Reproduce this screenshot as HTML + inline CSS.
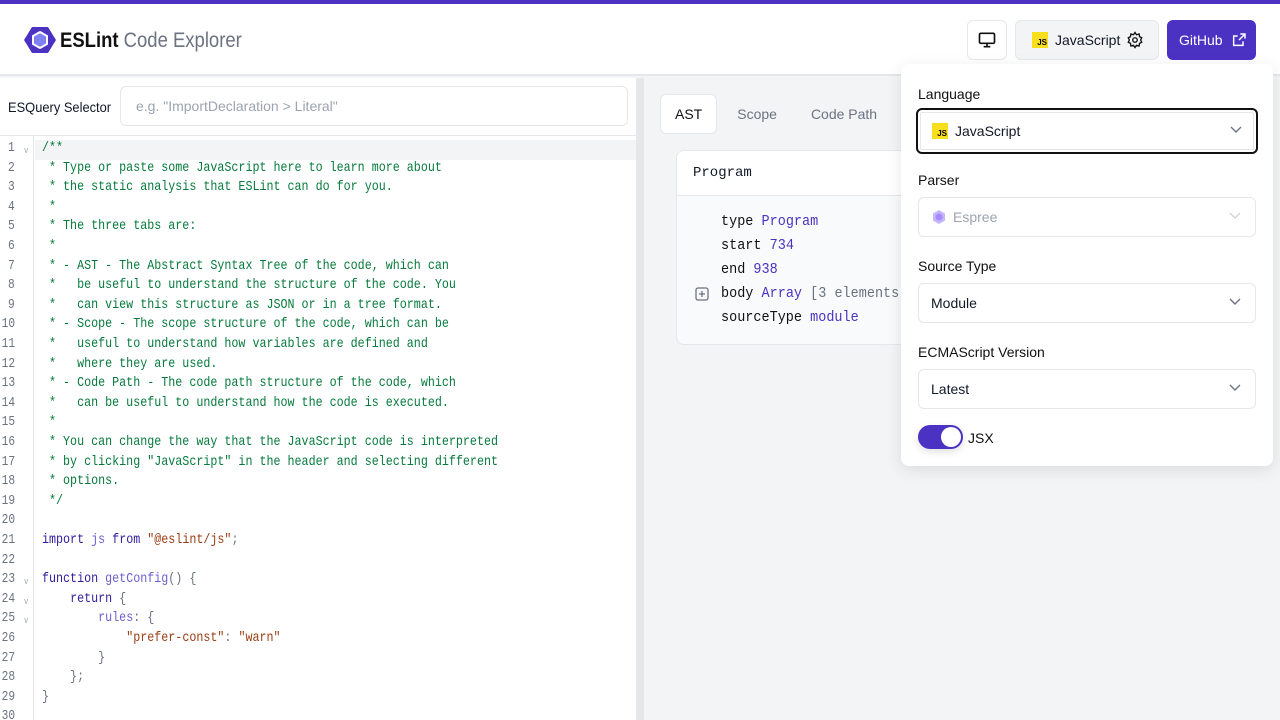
<!DOCTYPE html>
<html><head><style>
*{box-sizing:border-box;margin:0;padding:0}
html,body{width:1280px;height:720px;overflow:hidden}
body{font-family:"Liberation Sans",sans-serif;background:#f3f4f6;position:relative;color:#111827}
.top{position:absolute;left:0;top:0;width:1280px;height:4px;background:#4b32c3}
.hdr{position:absolute;left:0;top:4px;width:1280px;height:72px;background:#fff;border-bottom:2px solid #e5e7eb}
.logo{position:absolute;left:24px;top:22px}
.brand{position:absolute;left:60px;top:25px;font-size:21px;color:#111;transform:scaleX(.88);transform-origin:left}
.brand span{color:#6b7280}
.btn{position:absolute;top:16px;height:40px;border:1px solid #e5e7eb;border-radius:6px;display:flex;align-items:center;font-size:14px}
.left{position:absolute;left:0;top:78px;width:636px;height:642px;background:#fff;overflow:hidden}
.split{position:absolute;left:636px;top:78px;width:8px;height:642px;background:#e5e7eb}
.esq{position:absolute;left:8px;top:21px;font-size:14px;transform:scaleX(.92);transform-origin:left}
.inp{position:absolute;left:120px;top:8px;width:508px;height:40px;border:1px solid #e5e7eb;border-radius:6px;font-size:14px;color:#9ca3af;padding:11px 15px}
.code{position:absolute;left:0;top:57px;width:636px;border-top:1px solid #e5e7eb;height:590px}
.gut{position:absolute;left:0;top:0;width:34px;height:590px;border-right:1px solid #e5e7eb}
.ln{position:absolute;left:0;font-family:"Liberation Mono",monospace;font-size:14px;color:#6b7280;width:34px;padding-left:10px;height:19.6px;line-height:19.6px;transform:scaleX(.8);transform-origin:left}
.ln i{font-style:normal;font-size:9px;color:#9ca3af;position:absolute;left:30px;top:3px}
.cl{position:absolute;left:42px;font-family:"Liberation Mono",monospace;font-size:14px;white-space:pre;height:19.6px;line-height:19.6px;color:#6b7280;transform:scaleX(.835);transform-origin:left}
.c{color:#067a3c}.k{color:#2f1c9e}.v{color:#6c5fd1}.s{color:#9a3d12}
.tabs{position:absolute;left:660px;top:94px;display:flex;font-size:14px}
.tab{height:40px;padding:0 14px;line-height:40px;color:#6b7280;margin-right:6px}
.tab.a{background:#fff;border:1px solid #e5e7eb;border-radius:6px;color:#111;line-height:38px;margin-right:6px}
.card{position:absolute;left:676px;top:150px;width:300px;height:195px;background:#f9fafb;border:1px solid #e5e7eb;border-radius:8px;overflow:hidden}
.card .h{height:45px;background:#fff;border-bottom:1px solid #e5e7eb;font-family:"Liberation Mono",monospace;font-size:14px;padding:14px 16px}
.row{position:absolute;left:44px;font-family:"Liberation Mono",monospace;font-size:15px;white-space:pre;color:#111;transform:scaleX(.9);transform-origin:left}
.row b{font-weight:normal;color:#4b32c3}
.pop{position:absolute;left:901px;top:64px;width:372px;height:402px;background:#fff;border-radius:8px;box-shadow:0 4px 16px rgba(0,0,0,.1)}
.lab{position:absolute;left:17px;font-size:14px;color:#111}
.sel{position:absolute;left:17px;width:338px;height:40px;border:1px solid #e5e7eb;border-radius:6px;font-size:14px;display:flex;align-items:center;padding-left:12px}
.sel svg.ch{position:absolute;right:14px;top:14px}
.js{width:16px;height:16px;background:#f7df1e;font-size:8px;font-weight:bold;color:#000;display:inline-flex;align-items:flex-end;justify-content:flex-end;padding:0 1px 1px 0;margin-right:7px}
</style></head><body>
<div class="top"></div>
<div class="hdr">
<svg class="logo" width="32" height="28" viewBox="0 0 32 28"><path d="M8 1h16l8 13-8 13H8L0 14z" fill="#4b32c3"/><path d="M16 6l7 4v8l-7 4-7-4v-8z" fill="#8080f2" stroke="#fff" stroke-width="2"/></svg>
<div class="brand"><span style="color:#111;font-weight:600">ESLint</span> <span>Code Explorer</span></div>
<div class="btn" style="left:967px;width:40px;justify-content:center"><svg width="20" height="20" viewBox="0 0 24 24" fill="none" stroke="#111" stroke-width="2"><rect x="3" y="4" width="18" height="12" rx="1.5"/><path d="M12 16v4M8 20h8"/></svg></div>
<div class="btn" style="left:1015px;width:144px;background:#f3f4f6;padding-left:16px"><span class="js">JS</span>JavaScript<svg style="margin-left:6px" width="18" height="18" viewBox="0 0 24 24" fill="none" stroke="#111" stroke-width="1.8"><circle cx="12" cy="12" r="3"/><path d="M12 2l2 3 3.5-1 .5 3.5 3 1.5-1.5 3 1.5 3-3 1.5-.5 3.5-3.5-1-2 3-2-3-3.5 1-.5-3.5-3-1.5 1.5-3-1.5-3 3-1.5.5-3.5 3.5 1z"/></svg></div>
<div class="btn" style="left:1167px;width:89px;background:#4b32c3;border-color:#4b32c3;color:#fff;padding-left:11px">GitHub<svg style="margin-left:8px" width="16" height="16" viewBox="0 0 24 24" fill="none" stroke="#fff" stroke-width="2.2"><path d="M14 3h7v7M21 3l-9 9M18 14v6H4V6h6"/></svg></div>
</div>
<div class="left">
<div class="esq">ESQuery Selector</div>
<div class="inp">e.g. "ImportDeclaration &gt; Literal"</div>
<div class="code">
<div style="position:absolute;left:35px;top:4px;width:601px;height:19.6px;background:#f3f4f6"></div>
<div class="gut"></div>
<div class="ln" style="top:3px">1<i>v</i></div><div class="ln" style="top:22.6px">2</div><div class="ln" style="top:42.2px">3</div><div class="ln" style="top:61.8px">4</div><div class="ln" style="top:81.4px">5</div><div class="ln" style="top:101px">6</div><div class="ln" style="top:120.6px">7</div><div class="ln" style="top:140.2px">8</div><div class="ln" style="top:159.8px">9</div><div class="ln" style="top:179.4px;padding-left:2px">10</div><div class="ln" style="top:199px;padding-left:2px">11</div><div class="ln" style="top:218.6px;padding-left:2px">12</div><div class="ln" style="top:238.2px;padding-left:2px">13</div><div class="ln" style="top:257.8px;padding-left:2px">14</div><div class="ln" style="top:277.4px;padding-left:2px">15</div><div class="ln" style="top:297px;padding-left:2px">16</div><div class="ln" style="top:316.6px;padding-left:2px">17</div><div class="ln" style="top:336.2px;padding-left:2px">18</div><div class="ln" style="top:355.8px;padding-left:2px">19</div><div class="ln" style="top:375.4px;padding-left:2px">20</div><div class="ln" style="top:395px;padding-left:2px">21</div><div class="ln" style="top:414.6px;padding-left:2px">22</div><div class="ln" style="top:434.2px;padding-left:2px">23<i>v</i></div><div class="ln" style="top:453.8px;padding-left:2px">24<i>v</i></div><div class="ln" style="top:473.4px;padding-left:2px">25<i>v</i></div><div class="ln" style="top:493px;padding-left:2px">26</div><div class="ln" style="top:512.6px;padding-left:2px">27</div><div class="ln" style="top:532.2px;padding-left:2px">28</div><div class="ln" style="top:551.8px;padding-left:2px">29</div><div class="ln" style="top:571.4px;padding-left:2px">30</div>
<div class="cl c" style="top:3px">/**</div>
<div class="cl c" style="top:22.6px"> * Type or paste some JavaScript here to learn more about</div>
<div class="cl c" style="top:42.2px"> * the static analysis that ESLint can do for you.</div>
<div class="cl c" style="top:61.8px"> *</div>
<div class="cl c" style="top:81.4px"> * The three tabs are:</div>
<div class="cl c" style="top:101px"> *</div>
<div class="cl c" style="top:120.6px"> * - AST - The Abstract Syntax Tree of the code, which can</div>
<div class="cl c" style="top:140.2px"> *   be useful to understand the structure of the code. You</div>
<div class="cl c" style="top:159.8px"> *   can view this structure as JSON or in a tree format.</div>
<div class="cl c" style="top:179.4px"> * - Scope - The scope structure of the code, which can be</div>
<div class="cl c" style="top:199px"> *   useful to understand how variables are defined and</div>
<div class="cl c" style="top:218.6px"> *   where they are used.</div>
<div class="cl c" style="top:238.2px"> * - Code Path - The code path structure of the code, which</div>
<div class="cl c" style="top:257.8px"> *   can be useful to understand how the code is executed.</div>
<div class="cl c" style="top:277.4px"> *</div>
<div class="cl c" style="top:297px"> * You can change the way that the JavaScript code is interpreted</div>
<div class="cl c" style="top:316.6px"> * by clicking "JavaScript" in the header and selecting different</div>
<div class="cl c" style="top:336.2px"> * options.</div>
<div class="cl c" style="top:355.8px"> */</div>
<div class="cl" style="top:395px"><span class="k">import</span> <span class="v">js</span> <span class="k">from</span> <span class="s">"@eslint/js"</span>;</div>
<div class="cl" style="top:434.2px"><span class="k">function</span> <span class="v">getConfig</span>() {</div>
<div class="cl" style="top:453.8px">    <span class="k">return</span> {</div>
<div class="cl" style="top:473.4px">        <span class="v">rules</span>: {</div>
<div class="cl" style="top:493px">            <span class="s">"prefer-const"</span>: <span class="s">"warn"</span></div>
<div class="cl" style="top:512.6px">        }</div>
<div class="cl" style="top:532.2px">    };</div>
<div class="cl" style="top:551.8px">}</div>
</div>
</div>
<div class="split"></div>
<div class="tabs"><div class="tab a">AST</div><div class="tab">Scope</div><div class="tab">Code Path</div></div>
<div class="card"><div class="h">Program</div>
<div class="row" style="top:62px">type <b>Program</b></div>
<div class="row" style="top:86px">start <b>734</b></div>
<div class="row" style="top:110px">end <b>938</b></div>
<div class="row" style="top:134px">body <b>Array</b> <span style="color:#6b7280">[3 elements]</span></div>
<div class="row" style="top:158px">sourceType <b>module</b></div>
<svg style="position:absolute;left:18px;top:136px" width="14" height="14" viewBox="0 0 14 14" fill="none" stroke="#6b7280" stroke-width="1.3"><rect x="1" y="1" width="12" height="12" rx="2"/><path d="M7 4v6M4 7h6"/></svg>
</div>
<div class="pop">
<div class="lab" style="top:22px">Language</div>
<div class="sel" style="left:15px;top:44px;width:342px;height:46px;border:2px solid #111;box-shadow:inset 0 0 0 2px #fff,inset 0 0 0 3px #e5e7eb;padding-left:14px"><span class="js">JS</span>JavaScript<svg class="ch" style="top:16px" width="12" height="8" viewBox="0 0 12 8" fill="none" stroke="#6b7280" stroke-width="1.4"><path d="M1 1l5 5 5-5"/></svg></div>
<div class="lab" style="top:108px">Parser</div>
<div class="sel" style="top:133px;color:#9ca3af"><svg width="16" height="16" style="margin-right:6px" viewBox="0 0 16 16"><path d="M8 1l6 3.5v7L8 15l-6-3.5v-7z" fill="#c4b5fd"/><circle cx="8" cy="8" r="3.5" fill="#a78bfa"/></svg>Espree<svg class="ch" width="12" height="8" viewBox="0 0 12 8" fill="none" stroke="#d1d5db" stroke-width="1.4"><path d="M1 1l5 5 5-5"/></svg></div>
<div class="lab" style="top:194px">Source Type</div>
<div class="sel" style="top:219px">Module<svg class="ch" width="12" height="8" viewBox="0 0 12 8" fill="none" stroke="#6b7280" stroke-width="1.4"><path d="M1 1l5 5 5-5"/></svg></div>
<div class="lab" style="top:280px">ECMAScript Version</div>
<div class="sel" style="top:305px">Latest<svg class="ch" width="12" height="8" viewBox="0 0 12 8" fill="none" stroke="#6b7280" stroke-width="1.4"><path d="M1 1l5 5 5-5"/></svg></div>
<div style="position:absolute;left:17px;top:361px;width:45px;height:24px;border-radius:12px;background:#4b32c3;box-shadow:0 3px 8px rgba(0,0,0,.12)"><div style="position:absolute;right:2px;top:2px;width:20px;height:20px;border-radius:50%;background:#fff"></div></div>
<div class="lab" style="left:67px;top:366px">JSX</div>
</div>
</body></html>
